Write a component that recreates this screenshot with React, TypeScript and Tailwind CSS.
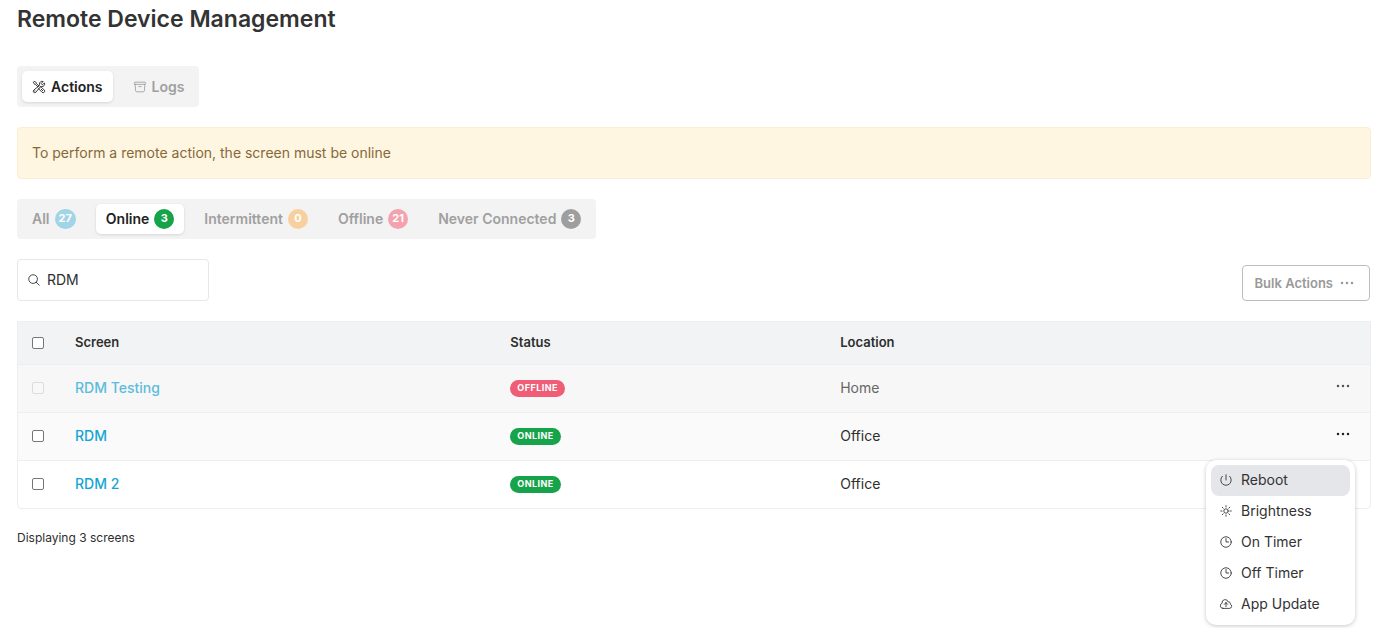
import { useState } from "react";
import type { IconType } from "react-icons";
import {
  HiEllipsisHorizontal,
  HiOutlineArchiveBox,
  HiOutlineClock,
  HiOutlineCloudArrowUp,
  HiOutlineMagnifyingGlass,
  HiOutlinePower,
  HiOutlineSun,
  HiOutlineWrenchScrewdriver,
} from "react-icons/hi2";

type Filter = { label: string; count: number; badge: string };

const filters: Filter[] = [
  { label: "All", count: 27, badge: "bg-[#a2d4e8]" },
  { label: "Online", count: 3, badge: "bg-[#16a34a]" },
  { label: "Intermittent", count: 0, badge: "bg-[#f8d09f]" },
  { label: "Offline", count: 21, badge: "bg-[#f4a2b0]" },
  { label: "Never Connected", count: 3, badge: "bg-[#9e9e9e]" },
];

type Screen = { name: string; online: boolean; location: string };

const screens: Screen[] = [
  { name: "RDM Testing", online: false, location: "Home" },
  { name: "RDM", online: true, location: "Office" },
  { name: "RDM 2", online: true, location: "Office" },
];

const menuItems: { label: string; icon: IconType }[] = [
  { label: "Reboot", icon: HiOutlinePower },
  { label: "Brightness", icon: HiOutlineSun },
  { label: "On Timer", icon: HiOutlineClock },
  { label: "Off Timer", icon: HiOutlineClock },
  { label: "App Update", icon: HiOutlineCloudArrowUp },
];

function Tick({ label, disabled = false }: { label: string; disabled?: boolean }) {
  return (
    <input
      type="checkbox"
      aria-label={label}
      disabled={disabled}
      className="block size-3 appearance-none rounded-[2px] border border-[#767676] bg-white checked:bg-[#0ea5d7] disabled:border-[#dcdcdc] disabled:bg-[#f8f8f8]"
    />
  );
}

function ActionMenu() {
  return (
    <div
      role="menu"
      className="absolute top-full right-[15px] z-10 w-[149px] rounded-[10px] bg-white p-[5px] shadow-[0_1px_4px_rgba(0,0,0,0.22)]"
    >
      {menuItems.map(({ label, icon: Icon }, i) => (
        <button
          key={label}
          role="menuitem"
          className={
            "flex h-[31px] w-full items-center gap-2 rounded-lg px-2 text-left text-sm text-[#333] " +
            (i === 0 ? "bg-[#e5e6ea]" : "bg-white")
          }
        >
          <Icon className="size-[14px]" />
          {label}
        </button>
      ))}
    </div>
  );
}

export default function App() {
  const [query, setQuery] = useState("RDM");
  const [filter, setFilter] = useState("Online");

  return (
    <main className="min-h-screen bg-white px-[17px] pt-1 font-['Inter',sans-serif] text-sm text-[#2e2e2e]">
      <h1 className="text-[23px] leading-[30px] font-semibold text-[#333]">Remote Device Management</h1>

      <nav className="mt-8 flex h-[41px] w-fit items-center rounded bg-[#f3f3f3] p-[5px]">
        <button className="flex h-[31px] items-center gap-[5px] rounded-[5px] bg-white px-[10px] font-semibold text-[#222] shadow-[0_1px_3px_rgba(0,0,0,0.12)]">
          <HiOutlineWrenchScrewdriver className="size-[14px]" />
          Actions
        </button>
        <button className="ml-[10px] flex h-[31px] items-center gap-[5px] rounded-[5px] px-[10px] font-semibold text-[#a0a0a0]">
          <HiOutlineArchiveBox className="size-[14px]" />
          Logs
        </button>
      </nav>

      <p className="mt-5 rounded border border-[#fbeed0] bg-[#fef6e1] px-[14px] py-[15px] leading-5 text-[#86683a]">
        To perform a remote action, the screen must be online
      </p>

      <div className="mt-5 flex h-10 w-fit items-center gap-[10px] rounded bg-[#f3f3f3] p-[5px]">
        {filters.map(({ label, count, badge }) => (
          <button
            key={label}
            onClick={() => setFilter(label)}
            className={
              "flex h-[30px] items-center gap-[5px] rounded-[5px] px-[10px] font-semibold " +
              (filter === label
                ? "bg-white text-[#222] shadow-[0_1px_3px_rgba(0,0,0,0.12)]"
                : "text-[#a0a0a0]")
            }
          >
            {label}
            <span
              className={
                "flex h-5 min-w-5 items-center justify-center rounded-full px-1 text-[11px] font-bold text-white " +
                badge
              }
            >
              {count}
            </span>
          </button>
        ))}
      </div>

      <div className="mt-5 flex items-end justify-between pr-px">
        <label className="flex h-[42px] w-48 items-center gap-[6px] rounded border border-[#e6e7ea] px-[9px]">
          <HiOutlineMagnifyingGlass className="size-[14px] shrink-0" />
          <input
            type="text"
            aria-label="Search screens"
            value={query}
            onChange={(e) => setQuery(e.target.value)}
            className="w-full min-w-0 bg-transparent outline-none"
          />
        </label>
        <button className="flex h-9 items-center gap-1 rounded border border-[#bdbdbd] px-3 text-[13px] font-semibold text-[#999]">
          Bulk Actions
          <HiEllipsisHorizontal className="size-5" />
        </button>
      </div>

      <div className="mt-5 rounded-b border border-[#eceef1]">
        <table className="w-full table-fixed text-left">
          <thead>
            <tr className="h-[42px] border-b border-[#eceef1] bg-[#f2f3f5] text-[13px]">
              <th className="w-[42px] pl-[14px]">
                <Tick label="Select all screens" />
              </th>
              <th className="w-[32.2%] px-[15px] font-semibold">Screen</th>
              <th className="w-[24.4%] px-[15px] font-semibold">Status</th>
              <th className="px-[15px] font-semibold">Location</th>
              <th className="w-16" aria-label="Actions" />
            </tr>
          </thead>
          <tbody>
            {screens.map(({ name, online, location }, i) => (
              <tr
                key={name}
                className={
                  "h-12 border-b border-[#eceef1] last:border-b-0 " +
                  (!online ? "bg-[#f7f7f7]" : i % 2 ? "bg-[#fafafa]" : "")
                }
              >
                <td className="pl-[14px]">
                  <Tick label={"Select " + name} disabled={!online} />
                </td>
                <td className="px-[15px]">
                  <a href="#" className={"font-medium " + (online ? "text-[#16a5d3]" : "text-[#5bbcdd]")}>
                    {name}
                  </a>
                </td>
                <td className="px-[15px]">
                  <span
                    className={
                      "flex h-[17px] w-fit items-center rounded-full px-[7px] text-[9px] font-bold tracking-wider text-white uppercase " +
                      (online ? "bg-[#16a34a]" : "bg-[#ef5d77]")
                    }
                  >
                    {online ? "Online" : "Offline"}
                  </span>
                </td>
                <td className={"px-[15px] " + (online ? "" : "text-[#666]")}>{location}</td>
                <td className="relative">
                  <button
                    aria-label={"Actions for " + name}
                    className={"mr-[17px] mb-1 ml-auto block " + (online ? "text-[#222]" : "text-[#555]")}
                  >
                    <HiEllipsisHorizontal className="size-5" />
                  </button>
                  {name === "RDM" && <ActionMenu />}
                </td>
              </tr>
            ))}
          </tbody>
        </table>
      </div>

      <p className="mt-5 text-xs leading-[18px]">Displaying 3 screens</p>
    </main>
  );
}
